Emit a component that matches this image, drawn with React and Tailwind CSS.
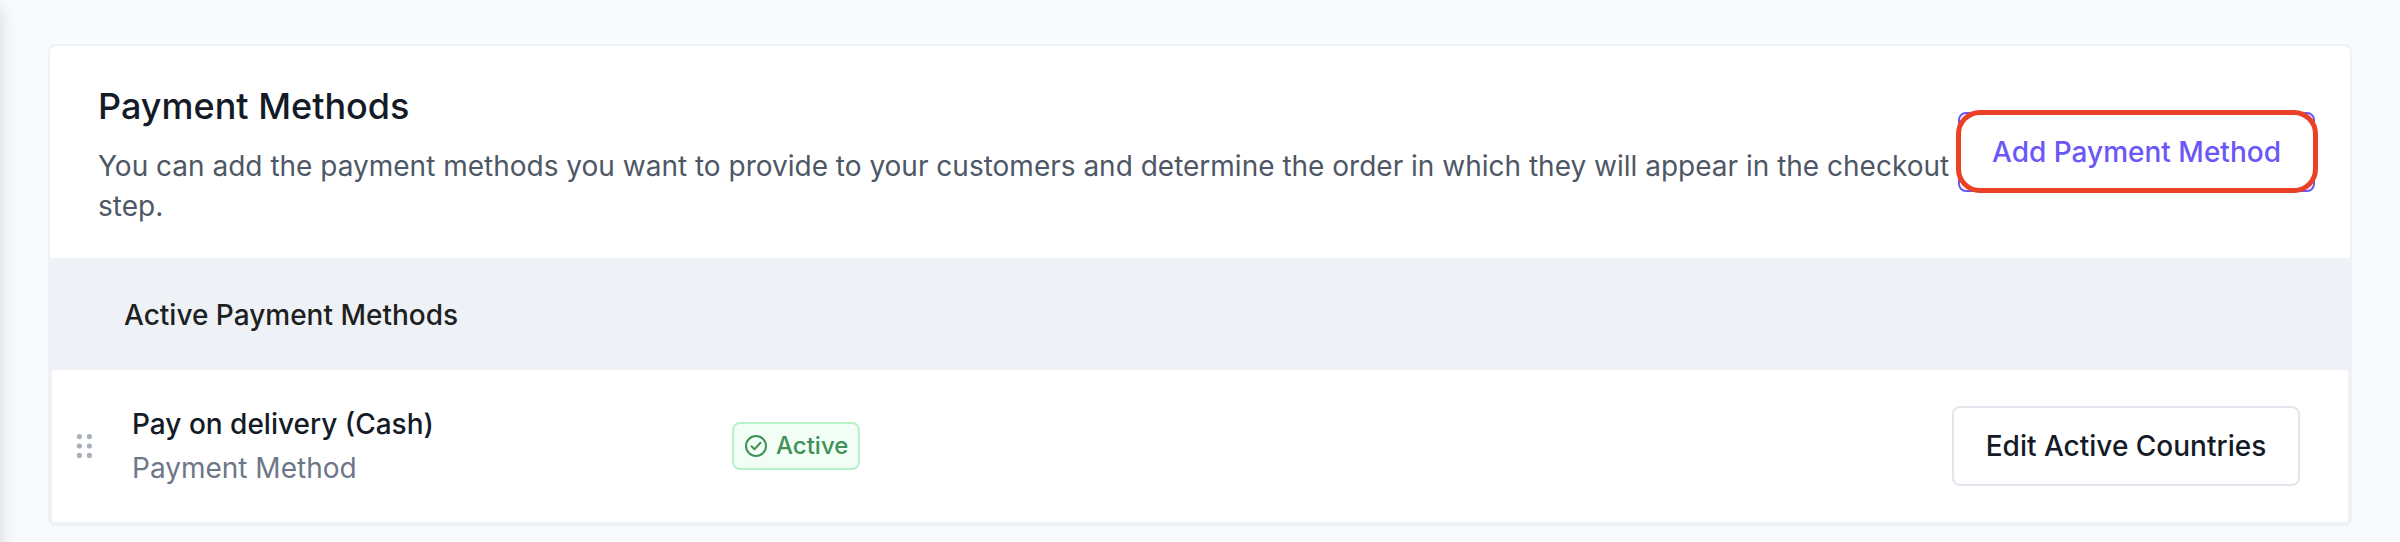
import React from 'react';

const DragHandle = () => (
    <svg width="16" height="26" viewBox="0 0 16 26" className="shrink-0 fill-[#a9b1bc]">
        {[3.6, 13, 22.4].map((y) => (
            <React.Fragment key={y}>
                <circle cx="3.4" cy={y} r="2.6" />
                <circle cx="13.4" cy={y} r="2.6" />
            </React.Fragment>
        ))}
    </svg>
);

const StatusBadge = ({ label }) => (
    <span className="flex items-center w-32 h-12 pl-[11px] rounded-lg border-2 border-[#b7f2ca] bg-[#f2fdf5] text-2xl font-medium text-[#3f9257]">
        <svg width="22" height="22" viewBox="0 0 22 22" fill="none" stroke="currentColor" strokeWidth="2" strokeLinecap="round" strokeLinejoin="round" className="shrink-0 mr-[9px]">
            <circle cx="11" cy="11" r="10" />
            <path d="M6.5 11.2l3 3 6-6.4" />
        </svg>
        {label}
    </span>
);

const PaymentMethodRow = ({ name, type, status }) => (
    <div className="flex items-center h-[152px] mx-0.5 mb-0.5 pl-6 pr-12 bg-white">
        <DragHandle />
        <div className="w-[600px] ml-10">
            <p className="leading-10 font-medium text-[#141b27]">{name}</p>
            <p className="mt-1 leading-10 text-[#6d7787]">{type}</p>
        </div>
        <StatusBadge label={status} />
        <button className="ml-auto w-[348px] h-20 rounded-lg border-2 border-[#e2e6ed] font-medium text-[#141b27] whitespace-nowrap">
            Edit Active Countries
        </button>
    </div>
);

const App = () => {
    return (
        <div className="relative h-[542px] w-[2400px] overflow-hidden bg-[#f8fafc] px-12 pt-11 font-['Inter',sans-serif] text-[28px]">
            {/* shadow cast by the sidebar */}
            <div className="absolute -left-10 top-2 h-[600px] w-10 shadow-[0_0_18px_rgba(0,0,0,0.15)]" />

            <div className="h-[482px] rounded-lg border-2 border-[#eef2f6] bg-[#eef2f7] overflow-hidden">
                <div className="flex h-[212px] pl-12 pr-[35px] bg-white">
                    <div className="pt-9 w-[1860px] shrink-0">
                        <h1 className="text-4xl leading-[48px] font-medium text-[#141b27]">Payment Methods</h1>
                        <p className="mt-4 leading-10 text-[#4e5766]">
                            You can add the payment methods you want to provide to your customers and determine the order in which they will appear in the checkout step.
                        </p>
                    </div>
                    <div className="relative ml-auto mt-[66px] h-20">
                        <button className="w-[357px] h-20 rounded-lg border-2 border-[#6b57f7] font-medium text-[#6b57f7] whitespace-nowrap">
                            Add Payment Method
                        </button>
                        <div className="absolute -left-0.5 -top-0.5 w-[362px] h-[83px] rounded-[24px] border-5 border-[#ea4025]" />
                    </div>
                </div>

                <div className="flex items-center h-28 pt-0.5 pl-[74px]">
                    <h2 className="leading-10 font-medium text-[#1f1f1f]">Active Payment Methods</h2>
                </div>

                <PaymentMethodRow name="Pay on delivery (Cash)" type="Payment Method" status="Active" />
            </div>
        </div>
    );
};

export default App;
